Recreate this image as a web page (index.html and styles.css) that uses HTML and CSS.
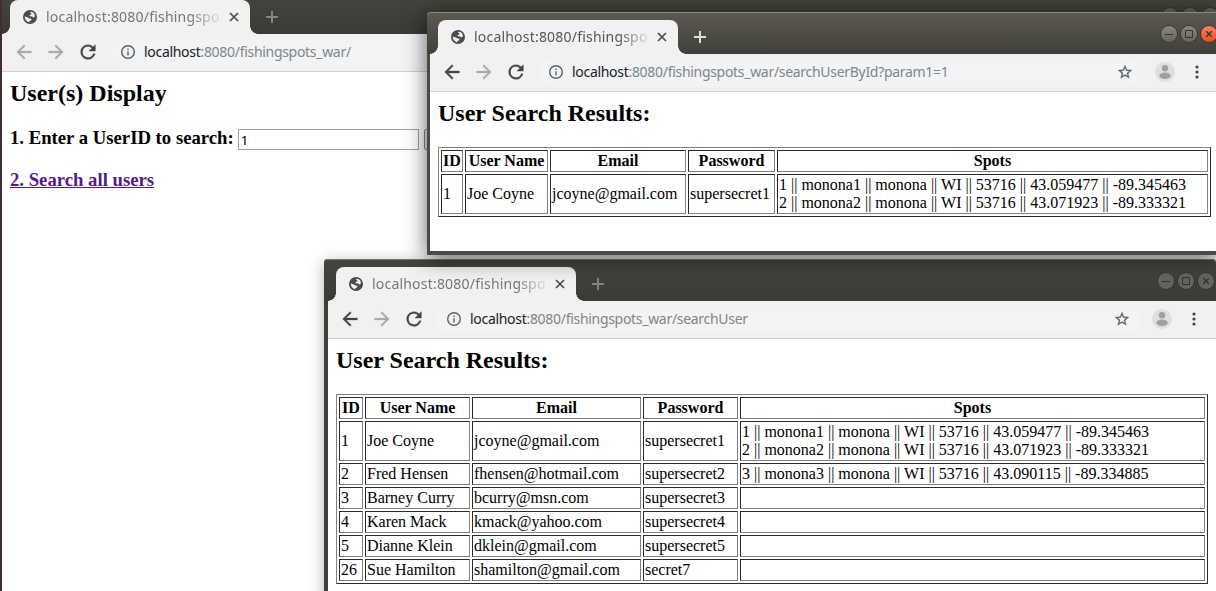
FILE: index.html
```
<!DOCTYPE html>
<html lang="en">
<head>
<meta charset="utf-8">
<title>Fishing spots</title>
<link rel="stylesheet" href="styles.css">
</head>
<body>
<svg class="defs" width="0" height="0">
  <symbol id="globe" viewBox="0 0 14 14"><circle cx="7" cy="7" r="7"/><path d="M7.600 1.700Q10.200 1.900 11.400 3.800L12 6.200L10.200 7.800L9.400 6.600L7 6.300L6.300 5.300L8.200 4.500L8.400 3.300L7 2.900zM1.700 6.600L4.300 7.300L6.800 8.600L8.600 9L8 10.500L6.500 11L6.200 12.200Q2 11.400 1.700 6.600z" fill="#f2f1f0"/></symbol>
  <symbol id="back" viewBox="0 0 24 24"><path d="M20 11H7.830l5.590-5.590L12 4l-8 8 8 8 1.410-1.410L7.830 13H20v-2z"/></symbol>
  <symbol id="forward" viewBox="0 0 24 24"><path d="M12 4l-1.410 1.410L16.170 11H4v2h12.170l-5.580 5.590L12 20l8-8z"/></symbol>
  <symbol id="reload" viewBox="0 0 24 24"><path d="M17.650 6.350A7.960 7.960 0 0 0 12 4a8 8 0 1 0 7.730 10h-2.080A6 6 0 1 1 12 6c1.660 0 3.140.69 4.220 1.780L13 11h7V4z"/></symbol>
  <symbol id="info" viewBox="2 2 20 20"><path d="M11 17h2v-6h-2zm0-8h2V7h-2zm1-7a10 10 0 1 0 0 20 10 10 0 0 0 0-20zm0 18a8 8 0 1 1 0-16 8 8 0 0 1 0 16z"/></symbol>
  <symbol id="star" viewBox="2 2 20 20"><path d="M22 9.240l-7.190-.62L12 2 9.190 8.630 2 9.240l5.460 4.730L5.820 21 12 17.270 18.180 21l-1.630-7.030zM12 15.400l-3.760 2.270 1-4.280-3.320-2.880 4.380-.38L12 6.100l1.710 4.040 4.380.38-3.320 2.880 1 4.280z"/></symbol>
  <symbol id="cross" viewBox="0 0 10 10"><path d="M1 1l8 8M9 1l-8 8" fill="none" stroke="currentColor" stroke-width="1.700"/></symbol>
  <symbol id="plus" viewBox="0 0 12 12"><path d="M6 0v12M0 6h12" fill="none" stroke="currentColor" stroke-width="2"/></symbol>
  <symbol id="avatar" viewBox="0 0 20 20"><circle cx="10" cy="10" r="10" fill="#dfdfdf"/><circle cx="10" cy="6.200" r="3.200" fill="#a0a0a0"/><ellipse cx="10" cy="13.800" rx="5.700" ry="3.200" fill="#a0a0a0"/></symbol>
  <symbol id="menu" viewBox="0 0 4 14"><circle cx="2" cy="2" r="1.600"/><circle cx="2" cy="7" r="1.600"/><circle cx="2" cy="12" r="1.600"/></symbol>
  <symbol id="min" viewBox="0 0 16 16"><path d="M4 8.500h8" fill="none" stroke="currentColor"/></symbol>
  <symbol id="max" viewBox="0 0 16 16"><path d="M4.500 4.500h7v7h-7z" fill="none" stroke="currentColor"/></symbol>
  <symbol id="close" viewBox="0 0 16 16"><path d="M5.200 5.200l5.600 5.600M10.800 5.200l-5.600 5.600" fill="none" stroke="currentColor" stroke-width="1.300"/></symbol>
</svg>

<main class="desktop">
  <section class="window home">
    <header class="titlebar">
      <div class="tab"><svg class="globe"><use href="#globe"/></svg><span class="title">localhost:8080/fishingspo</span><svg class="cross"><use href="#cross"/></svg></div>
      <svg class="plus"><use href="#plus"/></svg>
      <div class="controls"><svg><use href="#min"/></svg><svg><use href="#max"/></svg><svg><use href="#close"/></svg></div>
    </header>
    <nav class="toolbar">
      <svg class="nav off"><use href="#back"/></svg><svg class="nav off"><use href="#forward"/></svg><svg class="nav"><use href="#reload"/></svg>
      <div class="omnibox"><svg class="info"><use href="#info"/></svg><span class="url"><b>localhost</b>:8080/fishingspots_war/</span></div>
    </nav>
    <div class="page">
      <h2>User(s) Display</h2>
      <form class="search"><label for="uid">1. Enter a UserID to search:</label><input id="uid" type="text" value="1"><button type="button" class="submit"></button></form>
      <h3><a href="#all">2. Search all users</a></h3>
    </div>
  </section>

  <section class="window all">
    <header class="titlebar">
      <div class="tab"><svg class="globe"><use href="#globe"/></svg><span class="title">localhost:8080/fishingspo</span><svg class="cross"><use href="#cross"/></svg></div>
      <svg class="plus"><use href="#plus"/></svg>
      <div class="controls"><svg><use href="#min"/></svg><svg><use href="#max"/></svg><svg><use href="#close"/></svg></div>
    </header>
    <nav class="toolbar">
      <svg class="nav"><use href="#back"/></svg><svg class="nav off"><use href="#forward"/></svg><svg class="nav"><use href="#reload"/></svg>
      <div class="omnibox"><svg class="info"><use href="#info"/></svg><span class="url"><b>localhost</b>:8080/fishingspots_war/searchUser</span><svg class="star"><use href="#star"/></svg></div>
      <svg class="avatar"><use href="#avatar"/></svg><svg class="menu"><use href="#menu"/></svg>
    </nav>
    <div class="page">
      <h2>User Search Results:</h2>
      <table>
        <colgroup><col class="all-id"><col class="all-name"><col class="all-email"><col class="all-pass"><col></colgroup>
        <tr><th>ID</th><th>User Name</th><th>Email</th><th>Password</th><th>Spots</th></tr>
        <tr><td>1</td><td>Joe Coyne</td><td>jcoyne@gmail.com</td><td>supersecret1</td><td>1 || monona1 || monona || WI || 53716 || 43.059477 || -89.345463<br>2 || monona2 || monona || WI || 53716 || 43.071923 || -89.333321</td></tr>
        <tr><td>2</td><td>Fred Hensen</td><td>fhensen@hotmail.com</td><td>supersecret2</td><td>3 || monona3 || monona || WI || 53716 || 43.090115 || -89.334885</td></tr>
        <tr><td>3</td><td>Barney Curry</td><td>bcurry@msn.com</td><td>supersecret3</td><td></td></tr>
        <tr><td>4</td><td>Karen Mack</td><td>kmack@yahoo.com</td><td>supersecret4</td><td></td></tr>
        <tr><td>5</td><td>Dianne Klein</td><td>dklein@gmail.com</td><td>supersecret5</td><td></td></tr>
        <tr><td>26</td><td>Sue Hamilton</td><td>shamilton@gmail.com</td><td>secret7</td><td></td></tr>
      </table>
    </div>
  </section>

  <section class="window one active">
    <header class="titlebar">
      <div class="tab"><svg class="globe"><use href="#globe"/></svg><span class="title">localhost:8080/fishingspo</span><svg class="cross"><use href="#cross"/></svg></div>
      <svg class="plus"><use href="#plus"/></svg>
      <div class="controls"><svg><use href="#min"/></svg><svg><use href="#max"/></svg><svg><use href="#close"/></svg></div>
    </header>
    <nav class="toolbar">
      <svg class="nav"><use href="#back"/></svg><svg class="nav off"><use href="#forward"/></svg><svg class="nav"><use href="#reload"/></svg>
      <div class="omnibox"><svg class="info"><use href="#info"/></svg><span class="url"><b>localhost</b>:8080/fishingspots_war/searchUserById?param1=1</span><svg class="star"><use href="#star"/></svg></div>
      <svg class="avatar"><use href="#avatar"/></svg><svg class="menu"><use href="#menu"/></svg>
    </nav>
    <div class="page">
      <h2>User Search Results:</h2>
      <table>
        <colgroup><col class="one-id"><col class="one-name"><col class="one-email"><col class="one-pass"><col></colgroup>
        <tr><th>ID</th><th>User Name</th><th>Email</th><th>Password</th><th>Spots</th></tr>
        <tr><td>1</td><td>Joe Coyne</td><td>jcoyne@gmail.com</td><td>supersecret1</td><td>1 || monona1 || monona || WI || 53716 || 43.059477 || -89.345463<br>2 || monona2 || monona || WI || 53716 || 43.071923 || -89.333321</td></tr>
      </table>
    </div>
  </section>
</main>
</body>
</html>
```
FILE: styles.css
```
* { box-sizing: border-box; }
body { margin: 0; overflow: hidden; font: 16px/18px "Liberation Serif", serif; color: #000; }
svg { display: block; flex: none; fill: currentColor; }
.defs { position: absolute; }
.desktop { position: relative; width: 1216px; height: 591px; overflow: hidden; background: #4b343d; }

/* windows stacked on the desktop */
.window { position: absolute; display: flex; flex-direction: column; background: #fff; border: 0 solid #3f3e39; border-left-width: 4px; border-radius: 4px 4px 0 0; box-shadow: 0 3px 16px rgba(0,0,0,.3); }
.home { left: 2px; top: -8px; width: 1217px; height: 620px; border-left-width: 0; }
.all { left: 324px; top: 259px; width: 892px; height: 360px; }
.one { left: 427px; top: 12px; width: 792px; height: 243px; border-width: 0 0 4px 3px; border-color: #4d4a43; box-shadow: 0 3px 22px rgba(0,0,0,.62); }

.titlebar { display: flex; align-items: flex-end; height: 42px; margin-left: -4px; padding-left: 12px; background: linear-gradient(#454540, #3b3a36); border-radius: 4px 4px 0 0; box-shadow: inset 0 1px #777873; color: #85847f; }
.home .titlebar { margin-left: 0; padding-left: 8px; }
.one .titlebar { margin-left: -3px; padding-left: 11px; background: linear-gradient(#5d5a50, #403f3a); box-shadow: inset 0 1px #8b8981; color: #deddd8; }
.tab { position: relative; display: flex; align-items: center; width: 240px; height: 34px; padding-left: 13px; background: #f2f1f0; border-radius: 8px 8px 0 0; color: #4b4b4b; }
.tab::before, .tab::after { content: ""; position: absolute; bottom: 0; width: 8px; height: 8px; }
.tab::before { left: -8px; background: radial-gradient(circle at 0 0, transparent 7.500px, #f2f1f0 8px); }
.tab::after { right: -8px; background: radial-gradient(circle at 100% 0, transparent 7.500px, #f2f1f0 8px); }
.globe { width: 14px; height: 14px; }
.title { width: 179px; margin-left: 9px; overflow: hidden; white-space: nowrap; font: 14px/20px "Noto Sans", sans-serif; letter-spacing: .2px; color: #777; -webkit-mask-image: linear-gradient(90deg, #000 144px, transparent 178px); mask-image: linear-gradient(90deg, #000 144px, transparent 178px); }
.active .title { color: #555; }
.cross { width: 10px; height: 10px; margin-left: 4px; }
.plus { width: 12px; height: 12px; margin: 0 0 11px 16px; }
.controls { display: flex; gap: 4px; margin: 0 2px 12px auto; color: #33322e; }
.controls svg { width: 16px; height: 16px; border-radius: 50%; background: #65635d; box-shadow: 0 0 0 1px #35342f; }
.home .controls { margin-right: 1px; margin-bottom: 10px; }
.active .controls svg { background: linear-gradient(#88867e, #67655e); }
.active .controls svg:last-child { background: linear-gradient(#f5835f, #e8501f); }

.toolbar { display: flex; align-items: center; height: 38px; flex: none; padding: 0 20px 1px 11px; background: #f2f1f0; border-bottom: 1px solid #cfcfcf; color: #454545; }
.nav { width: 22px; height: 22px; margin-right: 10px; stroke: currentColor; stroke-width: .4; }
.off { color: #aaa; }
.omnibox { display: flex; align-items: center; flex: 1; height: 28px; margin-left: 1px; padding: 0 11px; background: #f1f3f4; border-radius: 14px; color: #5f6368; }
.info { width: 14px; height: 14px; }
.url { margin-left: 9px; white-space: nowrap; font: 14px/20px "Noto Sans", sans-serif; letter-spacing: -.3px; color: #80868b; }
.url b { font-weight: 400; color: #202124; }
.star { width: 14px; height: 14px; margin-left: auto; stroke: currentColor; stroke-width: .4; }
.avatar { width: 20px; height: 20px; margin-left: 12px; }
.menu { width: 4px; height: 14px; margin-left: 20px; }

.page { padding: 8px; }
h2 { margin: 0 0 20px; font-size: 24px; line-height: 27px; }
h3, .search { margin: 0; font-size: 18.720px; line-height: 22px; font-weight: bold; }
.search { display: flex; align-items: flex-end; height: 23px; margin-bottom: 19px; }
.search label { align-self: flex-start; }
.search input { width: 181px; height: 21px; margin-left: 4px; padding: 0 2px; border: 1px solid #a0a0a0; font: 13.330px "Noto Sans", sans-serif; }
.submit { width: 60px; height: 21px; margin-left: 5px; border: 1px solid #888; border-radius: 2px; background: #eee; }
h3 a { color: #551a8b; }
table { table-layout: fixed; width: 100%; border: 1px solid; border-color: #808080 #2b2b2b #2b2b2b #808080; border-spacing: 2px; }
th, td { height: 22px; padding: 1px; border: 1px solid; border-color: #2b2b2b #808080 #808080 #2b2b2b; white-space: nowrap; }
td { text-align: left; }
.one-id { width: 22px; } .one-name { width: 83px; } .one-email { width: 136px; } .one-pass { width: 87px; }
.all-id { width: 24px; } .all-name { width: 105px; } .all-email { width: 169px; } .all-pass { width: 95px; }
```
